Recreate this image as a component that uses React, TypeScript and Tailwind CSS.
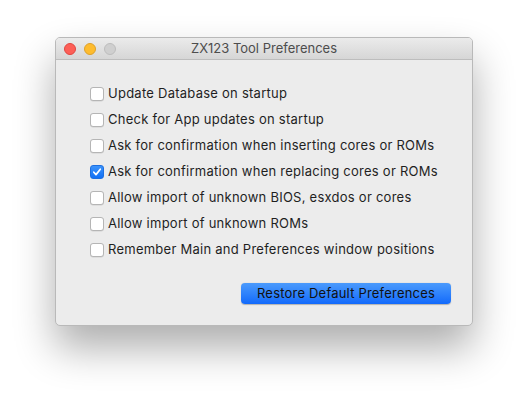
import React from 'react';

const options = [
  { label: 'Update Database on startup', checked: false },
  { label: 'Check for App updates on startup', checked: false },
  { label: 'Ask for confirmation when inserting cores or ROMs', checked: false },
  { label: 'Ask for confirmation when replacing cores or ROMs', checked: true },
  { label: 'Allow import of unknown BIOS, esxdos or cores', checked: false },
  { label: 'Allow import of unknown ROMs', checked: false },
  { label: 'Remember Main and Preferences window positions', checked: false },
];

function Checkbox({ checked }: { checked: boolean }) {
  if (checked) {
    return (
      <div className="w-[14px] h-[14px] rounded-[3px] bg-gradient-to-b from-[#3b93fb] to-[#1170f5] border border-[#1e6fe0] flex items-center justify-center shrink-0">
        <svg width="10" height="10" viewBox="0 0 10 10" fill="none">
          <path d="M1.8 5.2 L4 7.6 L8.3 2.2" stroke="white" strokeWidth="1.7" strokeLinecap="round" strokeLinejoin="round" />
        </svg>
      </div>
    );
  }
  return (
    <div className="w-[14px] h-[14px] rounded-[3px] bg-white border border-[#b5b5b5] shadow-[0_0.5px_0.5px_rgba(0,0,0,0.12)] shrink-0" />
  );
}

export default function App() {
  return (
    <div className="w-[529px] h-[400px] bg-white pt-[37px] pl-[55px] font-['Inter','Liberation_Sans',Arial,sans-serif]">
      <div className="w-[418px] h-[289px] rounded-[5px] bg-[#ececec] border border-[#b9b9b9] shadow-[0_22px_40px_rgba(0,0,0,0.32)] overflow-hidden flex flex-col">
        {/* title bar */}
        <div className="relative h-[22px] shrink-0 bg-gradient-to-b from-[#ebebeb] to-[#d6d6d6] border-b border-[#bdbdbd] flex items-center justify-center">
          <div className="absolute left-[8px] top-[5px] flex gap-[8px]">
            <div className="w-[12px] h-[12px] rounded-full bg-[#fd5f57] border border-[#e14640]" />
            <div className="w-[12px] h-[12px] rounded-full bg-[#febc2e] border border-[#dea12a]" />
            <div className="w-[12px] h-[12px] rounded-full bg-[#cfcfcf] border border-[#bdbdbd]" />
          </div>
          <span className="text-[13px] text-[#4d4d4d]">ZX123 Tool Preferences</span>
        </div>

        {/* content */}
        <div className="flex flex-col pt-[21px] pl-[34px] pr-[21px]">
          {options.map((o) => (
            <div key={o.label} className="h-[26px] flex items-center gap-[4px]">
              <Checkbox checked={o.checked} />
              <span className="text-[13px] text-[#1f1f1f] tracking-[0.25px]">{o.label}</span>
            </div>
          ))}
          <div className="flex justify-end mt-[20px]">
            <button className="w-[210px] h-[21px] rounded-[4px] bg-gradient-to-b from-[#4a9afc] to-[#1169fb] text-[13px] text-[#111] tracking-[0.2px] shadow-[0_0.5px_1px_rgba(0,0,0,0.25)]">
              Restore Default Preferences
            </button>
          </div>
        </div>
      </div>
    </div>
  );
}
